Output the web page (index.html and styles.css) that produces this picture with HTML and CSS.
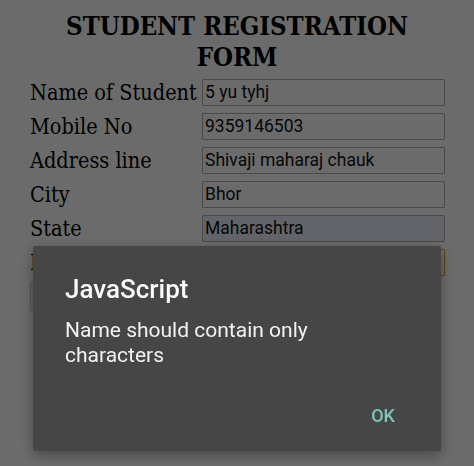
FILE: index.html
```html
<!doctype html>
<html lang="en">

<head>
    <meta charset="UTF-8">
    <title>Student Registration Form</title>
    <link rel="stylesheet" href="styles.css">
</head>

<body>
    <div class="page">
        <h1 class="form-title">STUDENT REGISTRATION FORM</h1>
        <form class="reg-form">
            <table class="reg-table">
                <tr>
                    <td class="label">Name of Student</td>
                    <td><input type="text" class="field" value="5 yu tyhj"></td>
                </tr>
                <tr>
                    <td class="label">Mobile No</td>
                    <td><input type="text" class="field" value="9359146503"></td>
                </tr>
                <tr>
                    <td class="label">Address line</td>
                    <td><input type="text" class="field" value="Shivaji maharaj chauk"></td>
                </tr>
                <tr>
                    <td class="label">City</td>
                    <td><input type="text" class="field" value="Bhor"></td>
                </tr>
                <tr>
                    <td class="label">State</td>
                    <td><input type="text" class="field autofill" value="Maharashtra"></td>
                </tr>
                <tr>
                    <td class="label">Email</td>
                    <td><input type="text" class="field focused" value=""></td>
                </tr>
                <tr>
                    <td class="label"><span class="submit"></span></td>
                    <td></td>
                </tr>
            </table>
        </form>
    </div>

    <!-- alert() dialog over a dimmed page -->
    <div class="scrim"></div>
    <div class="dialog" role="alertdialog">
        <h2 class="dialog-title">JavaScript</h2>
        <p class="dialog-msg">Name should contain only characters</p>
        <div class="dialog-actions">
            <button type="button" class="dialog-ok">OK</button>
        </div>
    </div>
</body>

</html>
```

FILE: styles.css
```css
@charset "UTF-8";
*,
*:after,
*:before {
    box-sizing: border-box;
    padding: 0;
    margin: 0;
}

body {
    background: #fff;
    font-family: "DejaVu Serif", serif;
    font-stretch: condensed;
    color: #000;
    width: 474px;
    height: 466px;
    overflow: hidden;
}

.page {
    padding-top: 11px;
}

.form-title {
    font-weight: bold;
    font-size: 25.5px;
    line-height: 31px;
    text-align: center;
    width: 380px;
    margin: 0 auto 2px;
}

.reg-table {
    width: 416px;
    margin: 0 auto;
    border-collapse: collapse;
}

.reg-table td {
    height: 34px;
    padding: 0;
    vertical-align: middle;
}

.label {
    font-size: 21.5px;
    white-space: nowrap;
    padding-left: 1px !important;
}

.field {
    display: block;
    margin-left: auto;
    width: 243px;
    height: 27px;
    padding: 0 2px;
    font: 17.5px "Roboto", sans-serif;
    color: #111;
    background: #fff;
    border: 1px solid #b0b0b0;
    border-radius: 1px;
    outline: none;
}

.autofill {
    background: #e9effc;
}

.focused {
    border: 1px solid #e3a418;
}

.submit {
    display: block;
    width: 80px;
    height: 29px;
    background: #f2f2f2;
    border: 1px solid #cfcfcf;
}

.scrim {
    position: fixed;
    inset: 0;
    background: rgba(0, 0, 0, 0.58);
}

.dialog {
    position: fixed;
    left: 33px;
    top: 246px;
    width: 408px;
    height: 205px;
    background: #464646;
    border-radius: 2px;
    box-shadow: 0 4px 14px rgba(0, 0, 0, 0.35);
    font-family: "Roboto", sans-serif;
    font-stretch: normal;
    color: #fafafa;
    padding: 28px 32px 0;
    display: flex;
    flex-direction: column;
}

.dialog-title {
    font-size: 26px;
    font-weight: 500;
    line-height: 30px;
}

.dialog-msg {
    font-size: 21px;
    line-height: 25px;
    margin-top: 14px;
    width: 290px;
    color: #f2f2f2;
}

.dialog-actions {
    margin-top: auto;
    display: flex;
    justify-content: flex-end;
    padding: 0 14px 25px 0;
}

.dialog-ok {
    font: 500 18px "Roboto", sans-serif;
    color: #7fc4b9;
    background: none;
    border: none;
}
```
